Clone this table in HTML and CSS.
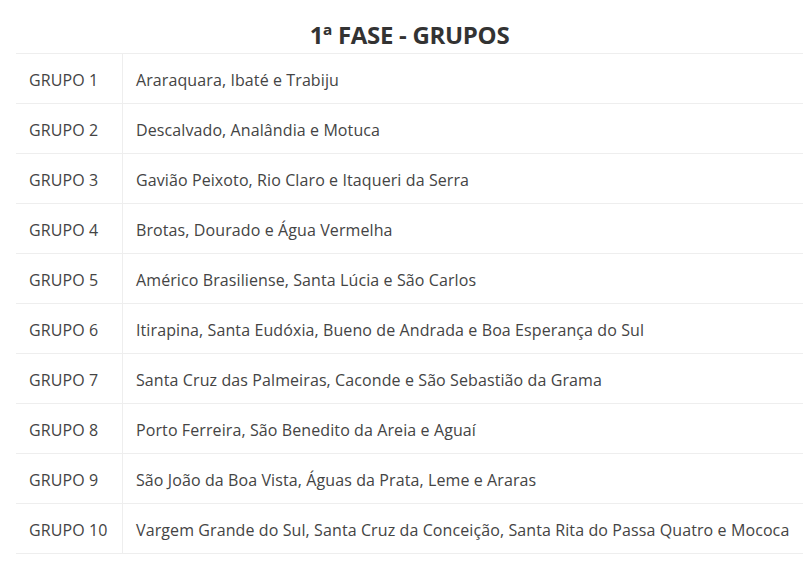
FILE: index.html
```html
<!DOCTYPE html>
<html lang="pt">
<head>
<meta charset="utf-8">
<link rel="stylesheet" href="styles.css">
</head>
<body>
<div class="wrap">
  <h2 class="title">1ª FASE - GRUPOS</h2>
  <table class="groups">
    <tbody>
      <tr><td class="name">GRUPO 1</td><td>Araraquara, Ibaté e Trabiju</td></tr>
      <tr><td class="name">GRUPO 2</td><td>Descalvado, Analândia e Motuca</td></tr>
      <tr><td class="name">GRUPO 3</td><td>Gavião Peixoto, Rio Claro e Itaqueri da Serra</td></tr>
      <tr><td class="name">GRUPO 4</td><td>Brotas, Dourado e Água Vermelha</td></tr>
      <tr><td class="name">GRUPO 5</td><td>Américo Brasiliense, Santa Lúcia e São Carlos</td></tr>
      <tr><td class="name">GRUPO 6</td><td>Itirapina, Santa Eudóxia, Bueno de Andrada e Boa Esperança do Sul</td></tr>
      <tr><td class="name">GRUPO 7</td><td>Santa Cruz das Palmeiras, Caconde e São Sebastião da Grama</td></tr>
      <tr><td class="name">GRUPO 8</td><td>Porto Ferreira, São Benedito da Areia e Aguaí</td></tr>
      <tr><td class="name">GRUPO 9</td><td>São João da Boa Vista, Águas da Prata, Leme e Araras</td></tr>
      <tr><td class="name">GRUPO 10</td><td>Vargem Grande do Sul, Santa Cruz da Conceição, Santa Rita do Passa Quatro e Mococa</td></tr>
    </tbody>
  </table>
</div>
</body>
</html>
```
FILE: styles.css
```css
html, body {
  margin: 0;
  padding: 0;
  background: #fff;
}
body {
  font-family: "Open Sans", "Liberation Sans", sans-serif;
  color: #333;
}
.wrap {
  padding: 0 6px 0 16px;
}
.title {
  margin: 0;
  padding-top: 17px;
  height: 36px;
  box-sizing: content-box;
  font-size: 24px;
  font-weight: 700;
  line-height: 36px;
  text-align: center;
  color: #333;
  letter-spacing: -0.3px;
}
.groups {
  width: 100%;
  border-collapse: collapse;
}
.groups td {
  border-top: 1px solid #eee;
  border-bottom: 1px solid #eee;
  height: 46px;
  padding: 3px 13px 0;
  font-size: 16px;
  line-height: 22px;
  color: #444;
  vertical-align: middle;
  letter-spacing: 0.1px;
  white-space: nowrap;
}
.groups td.name {
  width: 80px;
  border-right: 1px solid #eee;
}
```
